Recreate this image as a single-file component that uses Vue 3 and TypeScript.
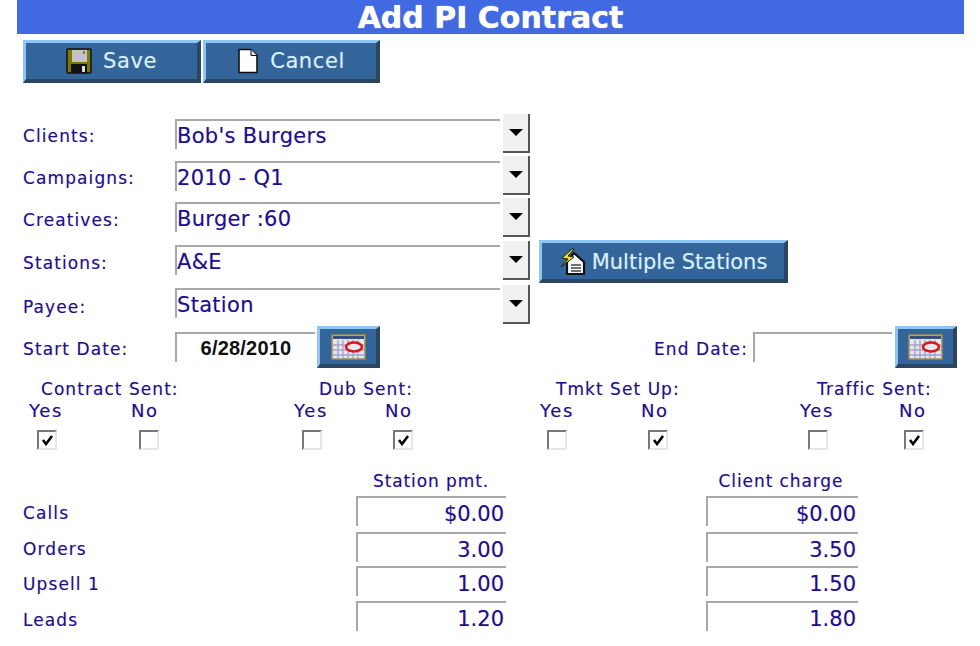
<template>
  <div class="page">
    <h1 class="title">Add PI Contract</h1>

    <div class="toolbar">
      <button type="button" class="btn btn-tool btn-save">
        <svg class="icon" width="26" height="26" viewBox="0 0 26 26">
          <rect x="1" y="1" width="24" height="24" rx="1" fill="#7a7a00" stroke="#111" stroke-width="1.5" />
          <rect x="6" y="2" width="15" height="12" fill="#c4c4c4" />
          <rect x="17" y="3" width="2" height="3" fill="#777" />
          <rect x="5" y="16" width="16" height="9" fill="#111" />
          <rect x="16" y="18" width="3" height="6" fill="#ddd" />
        </svg>
        Save
      </button>
      <button type="button" class="btn btn-tool">
        <svg class="icon" width="22" height="26" viewBox="0 0 22 26">
          <path d="M2 1.5h12l6 6v17H2z" fill="#fff" stroke="#111" stroke-width="1.6" stroke-linejoin="round" />
          <path d="M14 1.5v6h6" fill="#ddd" stroke="#111" stroke-width="1" />
        </svg>
        Cancel
      </button>
    </div>

    <div class="selects">
      <div v-for="row in selectRows" :key="row.label" class="select-row" :class="row.cls">
        <span class="label">{{ row.label }}</span>
        <div class="select-box">
          <span class="select-value">{{ row.value }}</span>
          <span class="select-arrow"><i></i></span>
        </div>
        <button v-if="row.label === 'Stations:'" type="button" class="btn btn-multi">
          <svg class="icon" width="27" height="28" viewBox="0 0 27 28">
            <path d="M15 5 25 14v12H8V14z" fill="#fff" stroke="#111" stroke-width="2.2" stroke-linejoin="round" />
            <path d="M12 17h10M12 20h10M12 23h10" stroke="#444" stroke-width="1.6" />
            <path d="M13 1 3 10l6 1-7 8 13-10-6-1 6-7z" fill="#f6e41c" stroke="#111" stroke-width=".9" />
          </svg>
          Multiple Stations
        </button>
      </div>
    </div>

    <div class="dates">
      <span class="label date-label">Start Date:</span>
      <div class="field date-field date-start">6/28/2010</div>
      <button type="button" class="btn btn-cal"><SvgCal /></button>
      <span class="label end-label">End Date:</span>
      <div class="field date-field date-end"></div>
      <button type="button" class="btn btn-cal btn-cal-end"><SvgCal /></button>
    </div>

    <div class="check-titles">
      <span v-for="t in checkTitles" :key="t">{{ t }}</span>
    </div>
    <div class="check-labels">
      <span v-for="(c, i) in checks" :key="i">{{ c ? 'No' : 'Yes' }}</span>
    </div>
    <div class="check-boxes">
      <span v-for="(c, i) in checkStates" :key="i" class="check">
        <svg v-if="c" width="13" height="12" viewBox="0 0 13 12">
          <path d="M2 6l3 4 6-8" fill="none" stroke="#000" stroke-width="2.6" />
        </svg>
      </span>
    </div>

    <div class="money">
      <div class="money-head">
        <span></span>
        <span class="money-title">Station pmt.</span>
        <span class="money-title">Client charge</span>
      </div>
      <div v-for="row in moneyRows" :key="row.label" class="money-row" :class="row.cls">
        <span class="label">{{ row.label }}</span>
        <div class="field money-field">{{ row.station }}</div>
        <div class="field money-field">{{ row.client }}</div>
      </div>
    </div>
  </div>
</template>

<script setup lang="ts">
import { h } from 'vue';

const SvgCal = () =>
  h('svg', { width: 35, height: 26, viewBox: '0 0 35 26' }, [
    h('rect', { x: 1, y: 1, width: 33, height: 24, fill: '#e6e6ee', stroke: '#a08a50', 'stroke-width': 1.5 }),
    h('rect', { x: 2, y: 2, width: 31, height: 3, fill: '#34507e' }),
    h('path', { d: 'M7 6v18M12 6v18M17 6v18M22 6v18M27 6v18M2 11h31M2 16h31M2 21h31', stroke: '#a4a4c8', 'stroke-width': 1.4 }),
    h('ellipse', { cx: 23, cy: 13, rx: 8, ry: 4.5, fill: '#e6e6ee', stroke: '#d81818', 'stroke-width': 2.6 }),
  ]);

const selectRows = [
  { label: 'Clients:', value: "Bob's Burgers", cls: 'r1' },
  { label: 'Campaigns:', value: '2010 - Q1', cls: 'r2' },
  { label: 'Creatives:', value: 'Burger :60', cls: 'r3' },
  { label: 'Stations:', value: 'A&E', cls: 'r4' },
  { label: 'Payee:', value: 'Station', cls: 'r5' },
];

const checkTitles = ['Contract Sent:', 'Dub Sent:', 'Tmkt Set Up:', 'Traffic Sent:'];
const checks = [false, true, false, true, false, true, false, true];
const checkStates = [true, false, false, true, false, true, false, true];

const moneyRows = [
  { label: 'Calls', station: '$0.00', client: '$0.00', cls: 'm1' },
  { label: 'Orders', station: '3.00', client: '3.50', cls: 'm2' },
  { label: 'Upsell 1', station: '1.00', client: '1.50', cls: 'm3' },
  { label: 'Leads', station: '1.20', client: '1.80', cls: 'm4' },
];
</script>

<style scoped>
.page {
  width: 980px;
  height: 646px;
  overflow: hidden;
  background: #fff;
  font-family: "DejaVu Sans", Verdana, sans-serif;
  color: #1f0f8c;
  box-sizing: border-box;
  text-shadow: 0 0 1px rgba(31, 15, 140, 0.3);
}

.title {
  margin: 0 16px 0 17px;
  height: 34px;
  background: #4169e1;
  color: #fff;
  font-size: 30px;
  font-weight: 700;
  line-height: 35px;
  text-align: center;
  text-shadow: 0 0 1px #fff;
}

.btn {
  display: flex;
  align-items: center;
  justify-content: center;
  padding: 0;
  box-sizing: border-box;
  background: #34659a;
  color: #d8effc;
  font-family: inherit;
  text-shadow: 0 0 1px rgba(216, 239, 252, 0.4);
  border-style: solid;
  border-width: 3px 4px 4px 3px;
  border-color: #8cc6f6 #2c4560 #2c4560 #8cc6f6;
}

.toolbar {
  display: flex;
  gap: 2px;
  margin: 6px 0 0 23px;
}

.btn-tool {
  width: 177px;
  height: 43px;
  gap: 11px;
  font-size: 21px;
  letter-spacing: 0.6px;
}

.btn-save {
  width: 178px;
}

.selects {
  margin-top: 31px;
}

.select-row {
  display: flex;
  align-items: flex-start;
  padding-left: 23px;
  height: 42px;
}

.r3 { height: 43px; }
.r4 { height: 44px; }
.r5 { height: 41px; }

.label {
  font-size: 17px;
  line-height: 24px;
  letter-spacing: 1.1px;
}

.select-row .label {
  width: 152px;
  padding-top: 10px;
}

.select-box {
  display: flex;
  width: 355px;
  height: 39px;
  align-items: flex-start;
}

.select-value {
  box-sizing: border-box;
  width: 325px;
  height: 30px;
  margin: 5px 3px 0 0;
  border-top: 2px solid #a8a8a8;
  border-left: 2px solid #a8a8a8;
  font-size: 21px;
  line-height: 30px;
  letter-spacing: 0.3px;
}

.r3 .select-value,
.r4 .select-value { margin-top: 4px; }
.r5 .select-value { margin-top: 3px; }

.select-arrow {
  display: flex;
  align-items: center;
  justify-content: center;
  box-sizing: border-box;
  width: 27px;
  height: 39px;
  background: #f0f0f0;
  border-right: 2px solid #555;
  border-bottom: 2px solid #555;
}

.select-arrow i {
  width: 0;
  height: 0;
  border-style: solid;
  border-width: 7px 7px 0;
  border-color: #000 transparent transparent;
}

.btn-multi {
  width: 249px;
  height: 43px;
  margin-top: -1px;
  margin-left: 9px;
  padding-top: 1px;
  gap: 6px;
  font-size: 21px;
}

.dates {
  display: flex;
  align-items: flex-start;
  padding-left: 23px;
}

.date-label {
  width: 152px;
  padding-top: 11px;
}

.end-label {
  width: 99px;
  margin-left: 274px;
  padding-top: 11px;
}

.field {
  box-sizing: border-box;
  border-top: 2px solid #a8a8a8;
  border-left: 2px solid #a8a8a8;
}

.date-field {
  height: 30px;
  margin-top: 6px;
}

.date-start {
  width: 140px;
  margin-right: 2px;
  color: #111;
  font-family: "Liberation Sans", Arial, sans-serif;
  font-size: 20px;
  font-weight: 700;
  line-height: 29px;
  text-align: center;
  letter-spacing: 0.2px;
  text-shadow: none;
}

.date-end {
  width: 139px;
  margin-right: 3px;
}

.btn-cal {
  width: 63px;
  height: 42px;
}

.btn-cal-end {
  width: 62px;
}

.check-titles,
.check-labels,
.check-boxes {
  display: grid;
  font-size: 17px;
}

.check-titles {
  grid-template-columns: 278px 237px 261px auto;
  margin-top: 9px;
  padding-left: 41px;
  line-height: 24px;
  letter-spacing: 1.05px;
}

.check-labels {
  grid-template-columns: 102px 163px 91px 155px 101px 159px 99px auto;
  margin-top: -2px;
  padding-left: 29px;
  font-size: 18px;
  line-height: 24px;
  letter-spacing: 1.6px;
}

.check-boxes {
  grid-template-columns: 102px 163px 91px 154px 101px 160px 96px auto;
  margin-top: 7px;
  padding-left: 37px;
}

.check {
  display: flex;
  align-items: center;
  justify-content: center;
  box-sizing: border-box;
  width: 20px;
  height: 20px;
  background: #fff;
  border-style: solid;
  border-width: 2px;
  border-color: #777 #e6e6e6 #e6e6e6 #777;
}

.money {
  margin-top: 19px;
  padding-left: 23px;
}

.money-head,
.money-row {
  display: grid;
  grid-template-columns: 333px 350px 152px;
}

.money-head {
  height: 27px;
}

.money-title {
  width: 150px;
  font-size: 17px;
  line-height: 24px;
  text-align: center;
  letter-spacing: 0.9px;
}

.money-row {
  height: 35px;
}

.money-row .label {
  padding-top: 5px;
}

.money-field {
  height: 30px;
  padding-right: 2px;
  font-size: 21px;
  line-height: 32px;
  text-align: right;
}

.m1 { height: 36px; }
.m2 { height: 34px; }
.m3 .money-field,
.m4 .money-field { line-height: 33px; }
.m3 .label { padding-top: 6px; }
.m4 .label { padding-top: 7px; }

.money-row .money-field:nth-child(2) { width: 150px; }
.money-row .money-field:nth-child(3) { width: 152px; }

.icon {
  flex: none;
}
</style>
